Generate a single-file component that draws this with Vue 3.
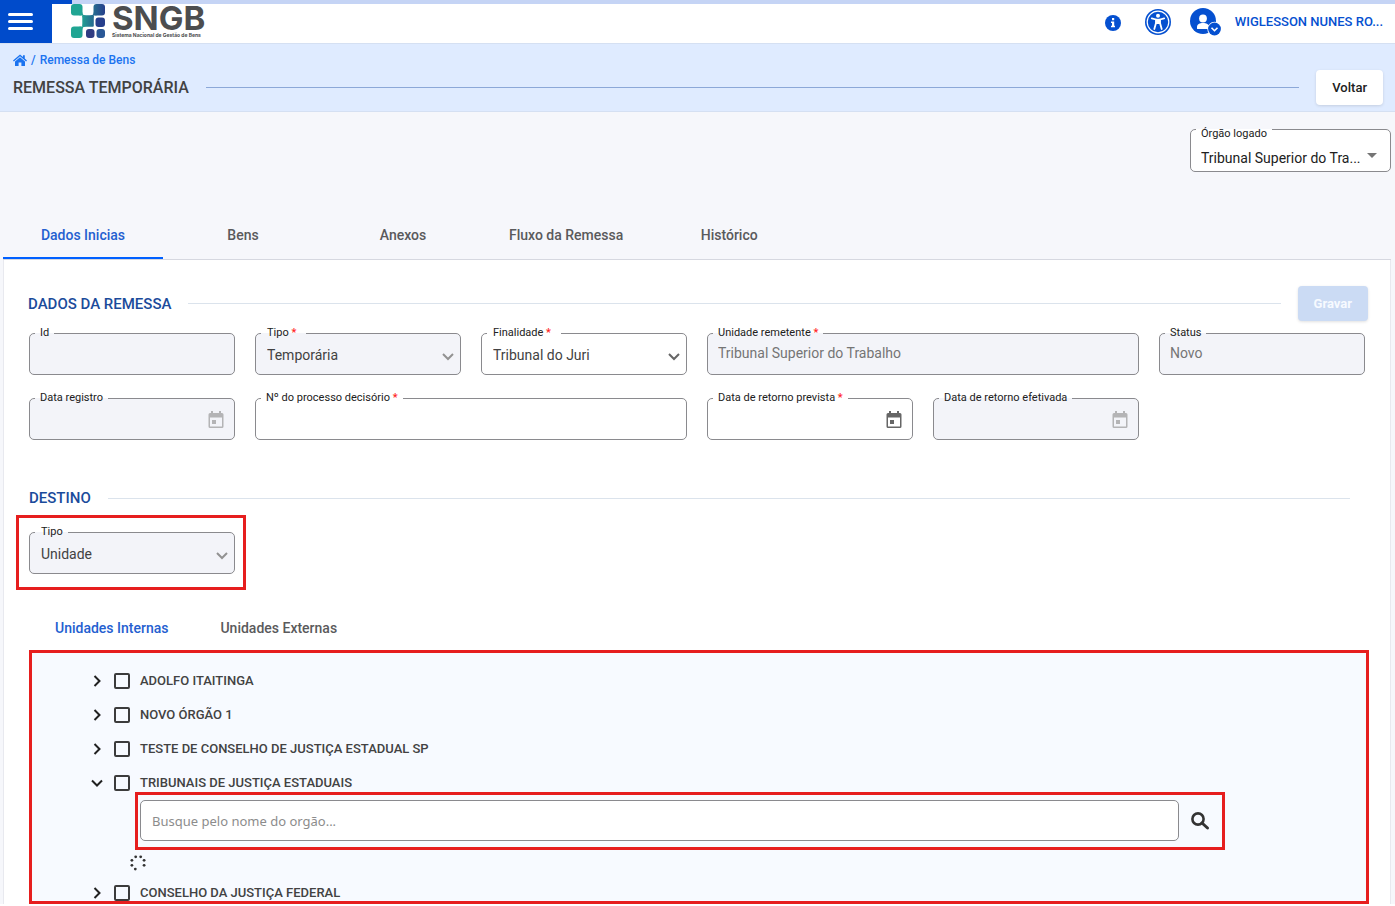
<script setup>
import { ref } from 'vue'

const tabs = ['Dados Inicias', 'Bens', 'Anexos', 'Fluxo da Remessa', 'Histórico']
const activeTab = ref('Dados Inicias')

const fields = [
  { id: 'id', label: 'Id', kind: 'text', value: '', disabled: true },
  { id: 'tipo', label: 'Tipo', kind: 'select', value: 'Temporária', disabled: true, required: true },
  { id: 'finalidade', label: 'Finalidade', kind: 'select', value: 'Tribunal do Juri', required: true },
  { id: 'unidade', label: 'Unidade remetente', kind: 'text', value: 'Tribunal Superior do Trabalho', disabled: true, required: true, wide: true },
  { id: 'status', label: 'Status', kind: 'text', value: 'Novo', disabled: true },
  { id: 'registro', label: 'Data registro', kind: 'date', value: '', disabled: true },
  { id: 'processo', label: 'Nº do processo decisório', kind: 'text', value: '', required: true, wide: true },
  { id: 'prevista', label: 'Data de retorno prevista', kind: 'date', value: '', required: true },
  { id: 'efetivada', label: 'Data de retorno efetivada', kind: 'date', value: '', disabled: true }
]

const unitTabs = ['Unidades Internas', 'Unidades Externas']
const activeUnitTab = ref('Unidades Internas')

const units = [
  { id: 'u1', name: 'ADOLFO ITAITINGA' },
  { id: 'u2', name: 'NOVO ÓRGÃO 1' },
  { id: 'u3', name: 'TESTE DE CONSELHO DE JUSTIÇA ESTADUAL SP' },
  { id: 'u4', name: 'TRIBUNAIS DE JUSTIÇA ESTADUAIS', open: true },
  { id: 'u5', name: 'CONSELHO DA JUSTIÇA FEDERAL' }
]
</script>

<template>
  <div class="app">
    <header class="topbar">
      <div class="progress"><span class="progress-value"></span></div>
      <button class="menu" type="button" aria-label="Menu">
        <span></span><span></span><span></span>
      </button>
      <a class="logo" href="#">
        <svg width="35" height="35" viewBox="0 0 35 35" aria-hidden="true">
          <defs>
            <linearGradient id="mark" gradientUnits="userSpaceOnUse" x1="0" y1="0" x2="34" y2="0">
              <stop offset="0.3" stop-color="#20a593" />
              <stop offset="0.55" stop-color="#257a91" />
              <stop offset="1" stop-color="#273f8c" />
            </linearGradient>
          </defs>
          <g fill="url(#mark)">
            <rect x="0" y="0" width="11.500" height="11.500" rx="3" />
            <rect x="22.500" y="0" width="11.500" height="11.500" rx="3" />
            <rect x="0" y="22.500" width="11.500" height="11.500" rx="3" />
            <rect x="11.300" y="11.300" width="11.500" height="11.500" rx="1" />
            <path d="M11.500 8.500q0 3 3 3v2h-3v-2h-3v-2zM22.500 8.500q0 3-3 3v2h3v-2h3v-2zM11.500 25.500q0-3 3-3v-2h-3v2h-3v2z" />
          </g>
          <rect x="24.500" y="13.500" width="9.500" height="9.500" rx="3" fill="#273f8c" />
          <rect x="15" y="25" width="8.500" height="9" rx="3" fill="#303c82" />
          <rect x="25.500" y="25" width="8.500" height="9" rx="3" fill="#2a5796" />
        </svg>
        <span class="logo-text">
          <strong>SNGB</strong>
          <small>Sistema Nacional de Gestão de Bens</small>
        </span>
      </a>
      <nav class="tools" aria-label="Conta">
        <button class="icon-button" type="button" aria-label="Informações">
          <svg width="16" height="18" viewBox="0 0 16 18">
            <circle cx="8" cy="10" r="8" fill="#0550d0" />
            <path d="M7 5h2.200v2.200H7zM6 8.400h3.200v4.400H10V14.300H6v-1.500h1V9.900H6z" fill="#fff" />
          </svg>
        </button>
        <button class="icon-button" type="button" aria-label="Acessibilidade">
          <svg width="26" height="26" viewBox="0 0 26 26">
            <circle cx="13" cy="13" r="13" fill="#0550d0" />
            <circle cx="13" cy="13" r="10.800" fill="none" stroke="#fff" stroke-width="1.200" />
            <circle cx="13" cy="6.800" r="2" fill="#fff" />
            <path d="M6.800 9.300 11 10.500V14L9.300 20M19.200 9.300 15 10.500V14L16.700 20" fill="none" stroke="#fff" stroke-width="1.800" stroke-linecap="round" stroke-linejoin="round" />
            <path d="M10.500 9.800h5V15h-5z" fill="#fff" />
          </svg>
        </button>
        <button class="user" type="button">
          <svg width="32" height="28" viewBox="0 0 32 28" aria-hidden="true">
            <circle cx="13" cy="13" r="13" fill="#0550d0" />
            <circle cx="13" cy="10.500" r="3.900" fill="#fff" />
            <path d="M7 20.500v-1.500c0-2.800 2.600-4 6-4s6 1.200 6 4v1.500q0 .6-.6.600H7.600Q7 21.100 7 20.500z" fill="#fff" />
            <circle cx="24.500" cy="21" r="7.200" fill="#fff" />
            <circle cx="24.500" cy="21" r="6.400" fill="#0550d0" />
            <path d="m21.500 19.700 3 3 3-3" fill="none" stroke="#fff" stroke-width="1.600" />
          </svg>
          <span>WIGLESSON NUNES RO...</span>
        </button>
      </nav>
    </header>

    <section class="pagehead">
      <nav class="crumbs" aria-label="Navegação">
        <a href="#" aria-label="Início">
          <svg width="14" height="12" viewBox="0 0 14 12">
            <path d="M7 .4 10 3V1.200h1.800v3.300L14 6.400l-.9 1L7 2.200.9 7.400 0 6.400z" fill="#1a73f0" />
            <path d="m7 3.300 5 4.200V12H8.400V8.500H5.600V12H2V7.500z" fill="#1a73f0" />
          </svg>
        </a>
        <span>/</span>
        <a href="#">Remessa de Bens</a>
      </nav>
      <div class="headline">
        <h1>REMESSA TEMPORÁRIA</h1>
        <span class="rule"></span>
        <button class="back" type="button">Voltar</button>
      </div>
    </section>

    <div class="org">
      <div class="field org-field">
        <label for="orgao">Órgão logado</label>
        <select id="orgao"><option>Tribunal Superior do Tra...</option></select>
        <svg class="caret" width="10" height="5" viewBox="0 0 10 5" aria-hidden="true"><path d="M0 0h10L5 5z" fill="#757575" /></svg>
      </div>
    </div>

    <main>
      <div class="tabs" role="tablist">
        <button v-for="tab in tabs" :key="tab" type="button" role="tab" class="tab" :class="{ active: tab === activeTab }" :aria-selected="tab === activeTab" @click="activeTab = tab">{{ tab }}</button>
      </div>

      <div class="panel">
        <div class="section-head">
          <h2>DADOS DA REMESSA</h2>
          <span class="rule"></span>
          <button class="save" type="button" disabled>Gravar</button>
        </div>

        <form class="grid" @submit.prevent>
          <div v-for="f in fields" :key="f.id" class="field" :class="{ wide: f.wide, disabled: f.disabled, choice: f.kind === 'select', required: f.required }">
            <label :for="f.id">{{ f.label }}<b v-if="f.required"> *</b></label>
            <select v-if="f.kind === 'select'" :id="f.id" :disabled="f.disabled"><option>{{ f.value }}</option></select>
            <input v-else :id="f.id" type="text" :value="f.value" :disabled="f.disabled" />
            <svg v-if="f.kind === 'select'" class="chevron" width="12" height="8" viewBox="0 0 12 8" aria-hidden="true"><path d="m1 1 5 5 5-5" /></svg>
            <svg v-if="f.kind === 'date'" class="calendar" width="16" height="18" viewBox="0 0 16 18" aria-hidden="true">
              <path d="M14 2h-1V0h-2v2H5V0H3v2H2Q.500 2 .500 3.500v12Q.500 17 2 17h12q1.500 0 1.500-1.500v-12Q15.500 2 14 2zm0 13.500H2V6.500h12zM4 9h4v4H4z" fill-rule="evenodd" />
            </svg>
          </div>
        </form>

        <div class="section-head destination">
          <h2>DESTINO</h2>
          <span class="rule"></span>
        </div>

        <div class="grid">
          <div class="field choice disabled framed">
            <label for="destino">Tipo</label>
            <select id="destino" disabled><option>Unidade</option></select>
            <svg class="chevron" width="12" height="8" viewBox="0 0 12 8" aria-hidden="true"><path d="m1 1 5 5 5-5" /></svg>
          </div>
        </div>

        <div class="unit-tabs" role="tablist">
          <button v-for="tab in unitTabs" :key="tab" type="button" role="tab" class="unit-tab" :class="{ active: tab === activeUnitTab }" :aria-selected="tab === activeUnitTab" @click="activeUnitTab = tab">{{ tab }}</button>
        </div>

        <ul class="tree">
          <li v-for="u in units" :key="u.id">
            <div class="node">
              <button class="toggle" type="button" :aria-label="'Expandir ' + u.name" :aria-expanded="!!u.open">
                <svg width="12" height="12" viewBox="0 0 12 12" :class="{ open: u.open }"><path d="m3.500 1 5 5-5 5" /></svg>
              </button>
              <input :id="u.id" type="checkbox" />
              <label :for="u.id">{{ u.name }}</label>
            </div>
            <template v-if="u.open">
              <div class="search">
                <input type="text" aria-label="Buscar órgão" placeholder="Busque pelo nome do orgão..." />
                <button type="button" aria-label="Buscar">
                  <svg width="20" height="20" viewBox="0 0 20 20">
                    <circle cx="8" cy="8" r="5.600" fill="none" stroke="#333" stroke-width="2.600" />
                    <path d="m12 12 5.500 5" stroke="#333" stroke-width="3" stroke-linecap="round" />
                  </svg>
                </button>
              </div>
              <svg class="spinner" width="16" height="16" viewBox="0 0 16 16" role="img" aria-label="Carregando">
                <g fill="#333">
                  <circle cx="5.700" cy="1.800" r="1.400" /><circle cx="10.700" cy="1.800" r="1.400" />
                  <circle cx="1.900" cy="5.300" r="1.400" /><circle cx="14.100" cy="5.300" r="1.400" />
                  <circle cx="1.900" cy="10.300" r="1.400" /><circle cx="14.100" cy="10.300" r="1.400" />
                  <circle cx="5.300" cy="14.100" r="1.400" />
                </g>
              </svg>
            </template>
          </li>
        </ul>
      </div>
    </main>
  </div>
</template>

<style>
body {
  margin: 0;
  min-height: 100vh;
  background: #fff;
}
</style>

<style scoped>
* {
  box-sizing: border-box;
}
.app {
  background: #f6f7fb;
  color: #424242;
  font-family: Roboto, "Liberation Sans", sans-serif;
  font-size: 14px;
}
button,
input,
select {
  margin: 0;
  padding: 0;
  border: 0;
  background: none;
  font: inherit;
  color: inherit;
}
a {
  color: #1a73f0;
  text-decoration: none;
}
h1,
h2 {
  margin: 0;
  font-weight: 500;
}
svg {
  display: block;
  flex: none;
}

.topbar {
  position: relative;
  display: flex;
  height: 43px;
  background: #fff;
}
.progress {
  position: absolute;
  inset: 0 0 auto;
  height: 4px;
  background: #c5d4f5;
}
.progress-value {
  display: block;
  width: 72px;
  height: 4px;
  background: #004bcb;
}
.menu {
  position: relative;
  display: flex;
  flex-direction: column;
  gap: 4px;
  width: 52px;
  padding: 13px 19px 0 8px;
  background: #004bcb;
}
.menu span {
  height: 3px;
  border-radius: 2px;
  background: #fff;
}
.logo {
  position: relative;
  display: flex;
  gap: 6px;
  margin-left: 19px;
  padding-top: 4px;
  color: #4c4d4f;
}
.logo-text {
  display: flex;
  flex-direction: column;
  font-family: Inter, "Liberation Sans", sans-serif;
}
.logo-text strong {
  font-size: 33px;
  line-height: 28px;
}
.logo-text small {
  font-size: 5px;
  line-height: 6px;
  font-weight: 700;
}
.tools {
  display: flex;
  align-items: center;
  gap: 24px;
  margin-left: auto;
  padding-right: 12px;
}
.user {
  display: flex;
  align-items: center;
  gap: 13px;
  margin-left: -5px;
  color: #0550d0;
  font-size: 13px;
  font-weight: 500;
}

.pagehead {
  padding: 7px 12px 6px 13px;
  border-top: 1px solid #d5e0f2;
  border-bottom: 1px solid #d5e0f2;
  background: #dfebff;
}
.crumbs {
  display: flex;
  align-items: center;
  gap: 4px;
  height: 18px;
  color: #1a73f0;
  font-size: 12px;
  font-weight: 500;
}
.headline,
.section-head {
  display: flex;
  align-items: center;
  gap: 17px;
}
.headline {
  margin-top: 1px;
}
h1 {
  font-size: 16px;
}
.rule {
  flex: 1;
  height: 1px;
  background: #dbe3ec;
}
.headline .rule {
  background: #8ca8d8;
}
.back,
.save {
  height: 35px;
  padding: 0 16px;
  border-radius: 4px;
  background: #fff;
  box-shadow: 0 1px 3px #0000001f;
  color: #212121;
  font-size: 13px;
  font-weight: 500;
}
.save {
  background: #cbdbf4;
  color: #f7faff;
  font-weight: 700;
}

.org {
  display: flex;
  justify-content: flex-end;
  padding: 17px 4px 0;
}

.field {
  --above: #fff;
  --fill: #fff;
  position: relative;
  height: 42px;
  border: 1px solid #8a8a8e;
  border-radius: 5px;
  background: var(--fill);
}
.field.disabled {
  --fill: #f3f4f9;
}
.field.wide {
  grid-column: span 2;
}
.field > label {
  position: absolute;
  top: -8px;
  left: 5px;
  z-index: 1;
  padding: 0 5px;
  background: linear-gradient(var(--above) 50%, var(--fill) 50%);
  color: #212121;
  font-size: 11px;
  line-height: 14px;
  white-space: nowrap;
}
.field.choice > label {
  padding-left: 6px;
}
.field.choice.required > label {
  padding-right: 10px;
}
.field.org-field {
  width: 201px;
  height: 43px;
}
.field.org-field > label {
  top: -1px;
  height: 10px;
  line-height: 10px;
  background: #fff;
}
label b {
  color: #f22;
  font-weight: 500;
}
.field > input,
.field > select {
  display: block;
  width: 100%;
  height: 100%;
  padding: 0 32px 2px 10px;
  border-radius: 5px;
  appearance: none;
  opacity: 1;
}
.field > input:disabled {
  color: #757575;
}
.field.choice > select {
  padding: 2px 32px 0 11px;
}
.field.org-field > select {
  padding: 14px 24px 0 10px;
  color: #212121;
}
.chevron,
.calendar,
.caret {
  position: absolute;
  pointer-events: none;
}
.chevron {
  top: 19px;
  right: 6px;
  fill: none;
  stroke: #666;
  stroke-width: 2;
}
.disabled .chevron {
  stroke: #929292;
}
.calendar {
  top: 12px;
  right: 10px;
  fill: #666;
}
.disabled .calendar {
  fill: #b4b4b6;
}
.caret {
  top: 23px;
  right: 13px;
}

.tabs {
  display: flex;
  margin: 39px 4px 0 3px;
  border-bottom: 1px solid #d6d8e0;
}
.tab {
  min-width: 160px;
  height: 48px;
  padding: 0 26px;
  border-bottom: 2px solid transparent;
  border-top: 2px solid transparent;
  color: #5a5a5c;
  font-weight: 500;
}
.tab.active {
  border-bottom-color: #0060ff;
  color: #2460d0;
}
.panel {
  margin: 0 4px 0 3px;
  padding: 26px 22px 0 24px;
  border-right: 1px solid #e8e9ef;
  border-left: 1px solid #e8e9ef;
  background: #fff;
}
h2 {
  color: #1b4b9b;
  font-size: 15px;
}
.grid {
  display: grid;
  grid-template-columns: repeat(6, minmax(0, 1fr));
  gap: 23px 20px;
  margin: 12px 3px 0 1px;
}
.destination {
  height: 20px;
  margin: 48px 18px 0 1px;
}
.destination + .grid {
  margin-top: 24px;
}
.framed::after {
  content: "";
  position: absolute;
  inset: -18px -12px -17px -14px;
  border: 3px solid #e61e1e;
  pointer-events: none;
}
.unit-tabs {
  display: flex;
  margin: 31px 0 0 1px;
}
.unit-tab {
  height: 45px;
  padding: 0 26px;
  color: #5a5a5c;
  font-weight: 500;
}
.unit-tab.active {
  color: #2460d0;
}

.tree {
  display: flex;
  flex-direction: column;
  gap: 18px;
  margin: 0 -1px 0 1px;
  padding: 20px 0 0;
  list-style: none;
  border: 3px solid #e61e1e;
  background: #f7faff;
}
.node {
  display: flex;
  align-items: center;
  height: 16px;
  padding-left: 59px;
  font-size: 13px;
  font-weight: 500;
}
.node label {
  padding-bottom: 1px;
  line-height: 15px;
}
.toggle svg {
  fill: none;
  stroke: #212121;
  stroke-width: 2;
}
.toggle svg.open {
  transform: rotate(90deg);
}
.node input {
  width: 16px;
  height: 16px;
  margin: 0 10px 0 11px;
  border: 2px solid #3c3c3c;
  border-radius: 2px;
  appearance: none;
}
.node input:checked {
  background: #0550d0;
}
.search {
  display: flex;
  margin: 1px 141px 0 103px;
  padding: 5px 5px 6px 2px;
  border: 3px solid #e61e1e;
}
.search input {
  flex: 1;
  min-width: 0;
  height: 41px;
  padding: 0 11px;
  border: 1px solid #8a8a8e;
  border-radius: 5px;
  background: #fff;
  font-family: "Noto Sans", "Open Sans", sans-serif;
  font-size: 13px;
}
.search input::placeholder {
  color: #8c8c8c;
  opacity: 1;
}
.search button {
  display: grid;
  place-items: center;
  width: 38px;
  padding-left: 4px;
}
.spinner {
  margin: 5px 0 -4px 98px;
}
</style>
